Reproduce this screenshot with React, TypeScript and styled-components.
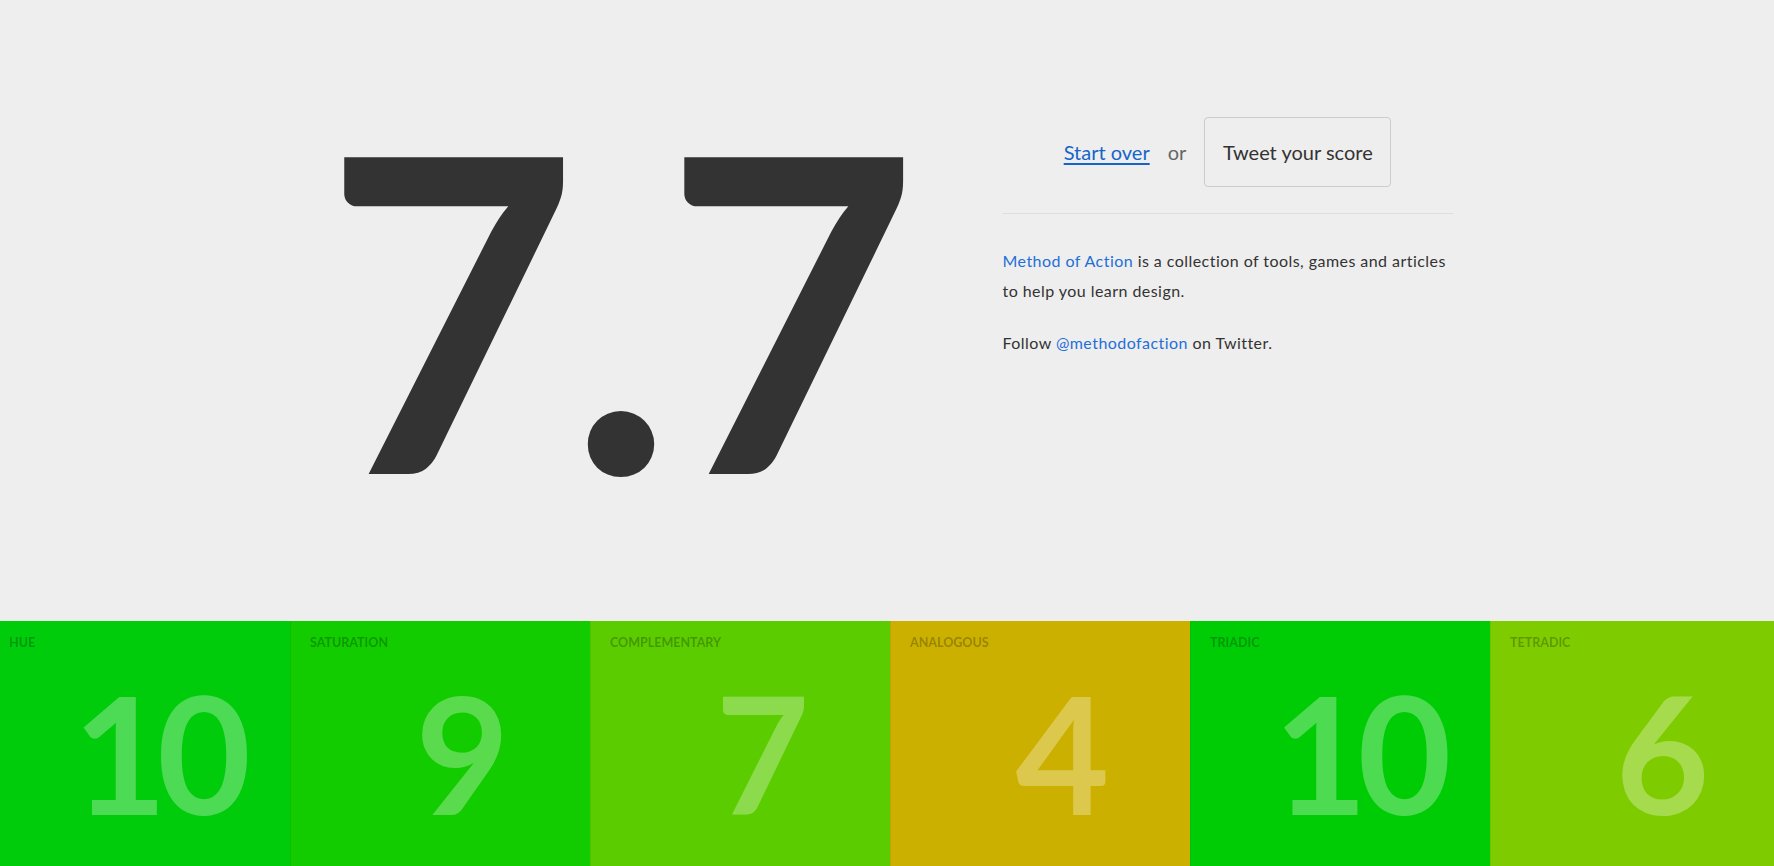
import React from "react";
import styled, { createGlobalStyle } from "styled-components";

/* ================= GLOBAL ================= */
const GlobalStyle = createGlobalStyle`
  html, body {
    margin: 0;
    padding: 0;
    background: #eeeeee;
    font-family: Lato, "Open Sans", sans-serif;
    color: #333333;
    overflow-x: hidden;
  }
`;

/* ================= HERO ================= */
const Hero = styled.section`
  height: 621px;
  box-sizing: border-box;
  padding-top: 86px;
  display: flex;
  justify-content: center;
  align-items: flex-start;
  gap: 81px;
`;

const ScoreColumn = styled.div`
  width: 600px;
  box-sizing: border-box;
  padding-right: 10px;
  display: flex;
  justify-content: center;
`;

const BigScore = styled.div`
  font-size: 438px;
  line-height: 1;
  font-weight: 700;
  color: #333333;
  letter-spacing: -9px;
`;

const Aside = styled.div`
  width: 450px;
  padding-top: 31px;
  font-size: 16px;
  line-height: 30px;
`;

const Actions = styled.div`
  display: flex;
  align-items: center;
  justify-content: center;
  gap: 18px;
  padding-bottom: 26px;
  border-bottom: 1px solid #dddddd;
  font-size: 20px;
`;

const StartOver = styled.a`
  color: #1565c8;
  text-decoration: underline;
  text-underline-offset: 3px;
  cursor: pointer;
`;

const Or = styled.span`
  color: #666666;
`;

const TweetButton = styled.button`
  height: 70px;
  width: 187px;
  box-sizing: border-box;
  background: transparent;
  border: 1px solid #cccccc;
  border-radius: 4px;
  font-family: inherit;
  font-size: 20px;
  color: #333333;
  cursor: pointer;
`;

const Paragraph = styled.p`
  margin: 0;
  letter-spacing: 0.45px;
  & + & {
    margin-top: 22px;
  }
  &:first-of-type {
    margin-top: 32px;
  }
`;

const Link = styled.a`
  color: #1f6fd8;
  text-decoration: none;
`;

/* ================= SCORE TILES ================= */
const Tiles = styled.section`
  display: flex;
  margin-left: -10px;
`;

const Tile = styled.div<{ $bg: string }>`
  flex: none;
  width: 300px;
  height: 300px;
  box-sizing: border-box;
  background: ${(p) => p.$bg};
  border-left: 1px solid rgba(0, 0, 0, 0.06);
  &:first-child {
    border-left: none;
  }
`;

const TileLabel = styled.div`
  padding: 14px 19px 0;
  font-size: 12.5px;
  font-weight: 700;
  text-transform: uppercase;
  color: rgba(0, 0, 0, 0.27);
`;

const TileScore = styled.div`
  padding-left: 34px;
  margin-top: 22px;
  text-align: center;
  font-size: 162px;
  line-height: 1;
  font-weight: 700;
  letter-spacing: -10px;
  color: rgba(255, 255, 255, 0.3);
`;

const scores = [
  { label: "Hue", value: 10, color: "#00cc0c" },
  { label: "Saturation", value: 9, color: "#12cc00" },
  { label: "Complementary", value: 7, color: "#5bcc00" },
  { label: "Analogous", value: 4, color: "#ccb000" },
  { label: "Triadic", value: 10, color: "#00cc06" },
  { label: "Tetradic", value: 6, color: "#7ecc00" },
];

/* ================= PAGE ================= */
export default function App() {
  return (
    <>
      <GlobalStyle />
      <Hero>
        <ScoreColumn>
          <BigScore>7.7</BigScore>
        </ScoreColumn>
        <Aside>
          <Actions>
            <StartOver>Start over</StartOver>
            <Or>or</Or>
            <TweetButton>Tweet your score</TweetButton>
          </Actions>
          <Paragraph>
            <Link>Method of Action</Link> is a collection of tools, games and articles
            to help you learn design.
          </Paragraph>
          <Paragraph>
            Follow <Link>@methodofaction</Link> on Twitter.
          </Paragraph>
        </Aside>
      </Hero>

      <Tiles>
        {scores.map((s) => (
          <Tile key={s.label} $bg={s.color}>
            <TileLabel>{s.label}</TileLabel>
            <TileScore>{s.value}</TileScore>
          </Tile>
        ))}
      </Tiles>
    </>
  );
}
